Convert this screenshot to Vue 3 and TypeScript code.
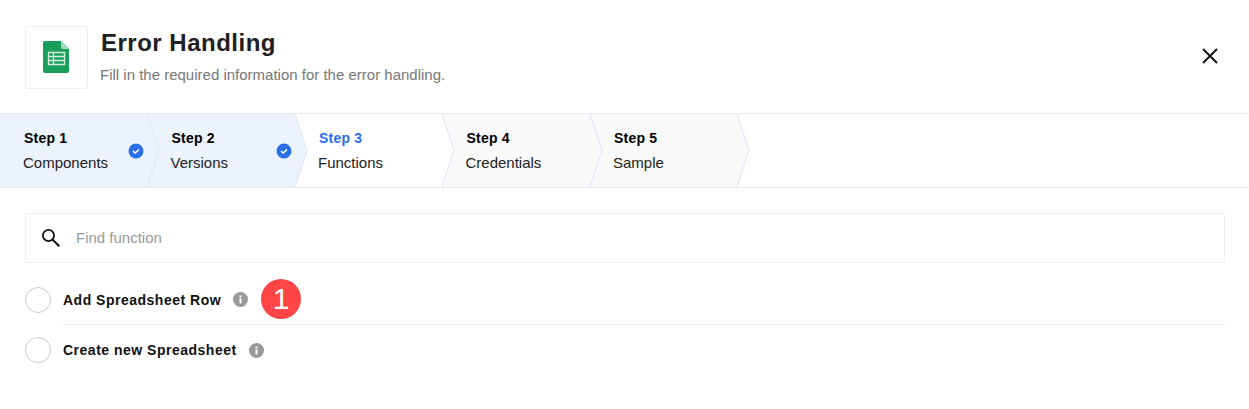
<script setup lang="ts">
interface Step { label: string; name: string; state: 'done' | 'active' | 'todo' }
const steps: Step[] = [
  { label: 'Step 1', name: 'Components', state: 'done' },
  { label: 'Step 2', name: 'Versions', state: 'done' },
  { label: 'Step 3', name: 'Functions', state: 'active' },
  { label: 'Step 4', name: 'Credentials', state: 'todo' },
  { label: 'Step 5', name: 'Sample', state: 'todo' },
]
const functions = ['Add Spreadsheet Row', 'Create new Spreadsheet']
</script>

<template>
  <div class="page">
    <header class="head">
      <div class="logo">
        <svg width="26" height="32" viewBox="0 0 26 32">
          <path d="M2 0H18L26 8V30a2 2 0 0 1-2 2H2a2 2 0 0 1-2-2V2a2 2 0 0 1 2-2Z" fill="#1a9f5b" />
          <path d="M18 0L26 8H20a2 2 0 0 1-2-2Z" fill="#a5d8bf" />
          <path d="M5.5 11.5H21.5V23.5H5.5Z M5.5 15.5H21.5 M5.5 19.5H21.5 M10.5 11.5V23.5" fill="none" stroke="#d5eee0" stroke-width="1.3" />
        </svg>
      </div>
      <div class="titles">
        <h1>Error Handling</h1>
        <p>Fill in the required information for the error handling.</p>
      </div>
      <svg class="close" width="18" height="18" viewBox="0 0 18 18">
        <path d="M2 2L16 16M16 2L2 16" stroke="#111" stroke-width="2" fill="none" />
      </svg>
    </header>

    <nav class="steps">
      <div v-for="(s, i) in steps" :key="s.label" class="step" :class="s.state" :style="{ zIndex: 10 - i }">
        <svg class="shape" width="160" height="73" viewBox="0 0 160 73">
          <path class="fill" d="M0 0H147.5L159 36.5L147.5 73H0Z" />
          <path class="edge" d="M147 0L159 36.5L147 73" />
        </svg>
        <div class="step-text">
          <strong>{{ s.label }}</strong>
          <span>{{ s.name }}</span>
        </div>
        <svg v-if="s.state === 'done'" class="tick" width="16" height="16" viewBox="0 0 16 16">
          <circle cx="8" cy="8" r="7.5" fill="#2a6ee8" />
          <path d="M5 8.2L7.2 10L11 6.5" fill="none" stroke="#fff" stroke-width="1.6" />
        </svg>
      </div>
    </nav>

    <main class="body">
      <div class="search">
        <svg width="18" height="18" viewBox="0 0 18 18">
          <circle cx="6.5" cy="6.5" r="5.6" fill="none" stroke="#111" stroke-width="1.8" />
          <path d="M10.7 10.7L17.3 17.3" stroke="#111" stroke-width="2" fill="none" />
        </svg>
        <span>Find function</span>
      </div>
      <ul class="list">
        <li v-for="(f, i) in functions" :key="f" class="row">
          <span class="radio"></span>
          <div class="row-main" :class="{ lined: i === 0 }">
            <span class="fname">{{ f }}</span>
            <svg class="info" width="15" height="15" viewBox="0 0 15 15">
              <circle cx="7.5" cy="7.5" r="7.5" fill="#999" />
              <rect x="6.5" y="6.5" width="2" height="5" fill="#fff" />
              <rect x="6.5" y="3.5" width="2" height="2" fill="#fff" />
            </svg>
            <span v-if="i === 0" class="badge">1</span>
          </div>
        </li>
      </ul>
    </main>
  </div>
</template>

<style>
html, body { margin: 0; background: #fff; }
</style>

<style scoped>
.page {
  width: 1249px;
  height: 409px;
  overflow: hidden;
  background: #fff;
  font-family: "Liberation Sans", Arial, sans-serif;
  color: #1f2023;
}
.head {
  height: 113px;
  box-sizing: border-box;
  display: flex;
  align-items: flex-start;
  padding: 26px 30px 0 25px;
}
.logo {
  width: 63px;
  height: 63px;
  box-sizing: border-box;
  border: 1px solid #eeeeee;
  border-radius: 2px;
  display: flex;
  align-items: flex-start;
  justify-content: flex-start;
  padding: 14px 0 0 17px;
  flex: none;
}
.titles { margin-left: 13px; flex: 1; }
h1 {
  margin: 2px 0 0;
  font-size: 24px;
  line-height: 30px;
  font-weight: 700;
  letter-spacing: 0.5px;
  color: #1f2023;
}
p {
  margin: 8px 0 0 -1px;
  font-size: 15px;
  line-height: 18px;
  color: #777;
}
.close { margin-top: 21px; flex: none; }
.steps {
  height: 75px;
  box-sizing: border-box;
  display: flex;
  border-top: 1px solid #e6eaf0;
  border-bottom: 1px solid #e6eaf0;
  background: #fff;
}
.step {
  position: relative;
  width: 147.5px;
  height: 73px;
  flex: none;
}
.shape { position: absolute; left: 0; top: 0; }
.fill { fill: #fff; }
.edge { fill: none; stroke: #dde5f8; stroke-width: 1; }
.done .fill { fill: #edf3fd; }
.todo .fill { fill: #f9f9fa; }
.step-text {
  position: relative;
  padding: 15px 0 0 24px;
  display: flex;
  flex-direction: column;
}
.step-text strong {
  font-size: 14px;
  line-height: 18px;
  letter-spacing: 0.2px;
  color: #000;
}
.step-text span {
  margin: 7px 0 0 -1px;
  font-size: 15px;
  line-height: 18px;
  color: #222;
}
.active strong { color: #2a6ee8; }
.tick { position: absolute; left: 128px; top: 29px; }
.body { padding: 25px 24px 0 25px; }
.search {
  height: 50px;
  box-sizing: border-box;
  border: 1px solid #eeeeee;
  border-radius: 2px;
  display: flex;
  align-items: center;
  padding-left: 16px;
  font-size: 15px;
  color: #999;
}
.search span { margin: -2px 0 0 16px; }
.list { list-style: none; margin: 0; padding: 0; }
.row { display: flex; align-items: center; }
.row:first-child { padding-top: 12px; }
.radio {
  width: 26px;
  height: 26px;
  box-sizing: border-box;
  border: 1px solid #ccc;
  border-radius: 50%;
  margin-right: 12px;
  flex: none;
}
.row-main {
  flex: 1;
  height: 50px;
  box-sizing: border-box;
  display: flex;
  align-items: center;
}
.lined { border-bottom: 1px solid #eeeeee; }
.fname {
  font-size: 14px;
  font-weight: 700;
  letter-spacing: 0.5px;
  color: #111;
}
.info { margin-left: 12px; flex: none; }
.badge {
  width: 40px;
  height: 40px;
  margin: -2px 0 0 13px;
  border-radius: 50%;
  background: #ff4545;
  color: #fff;
  font-size: 30px;
  line-height: 40px;
  text-align: center;
  flex: none;
}
</style>
